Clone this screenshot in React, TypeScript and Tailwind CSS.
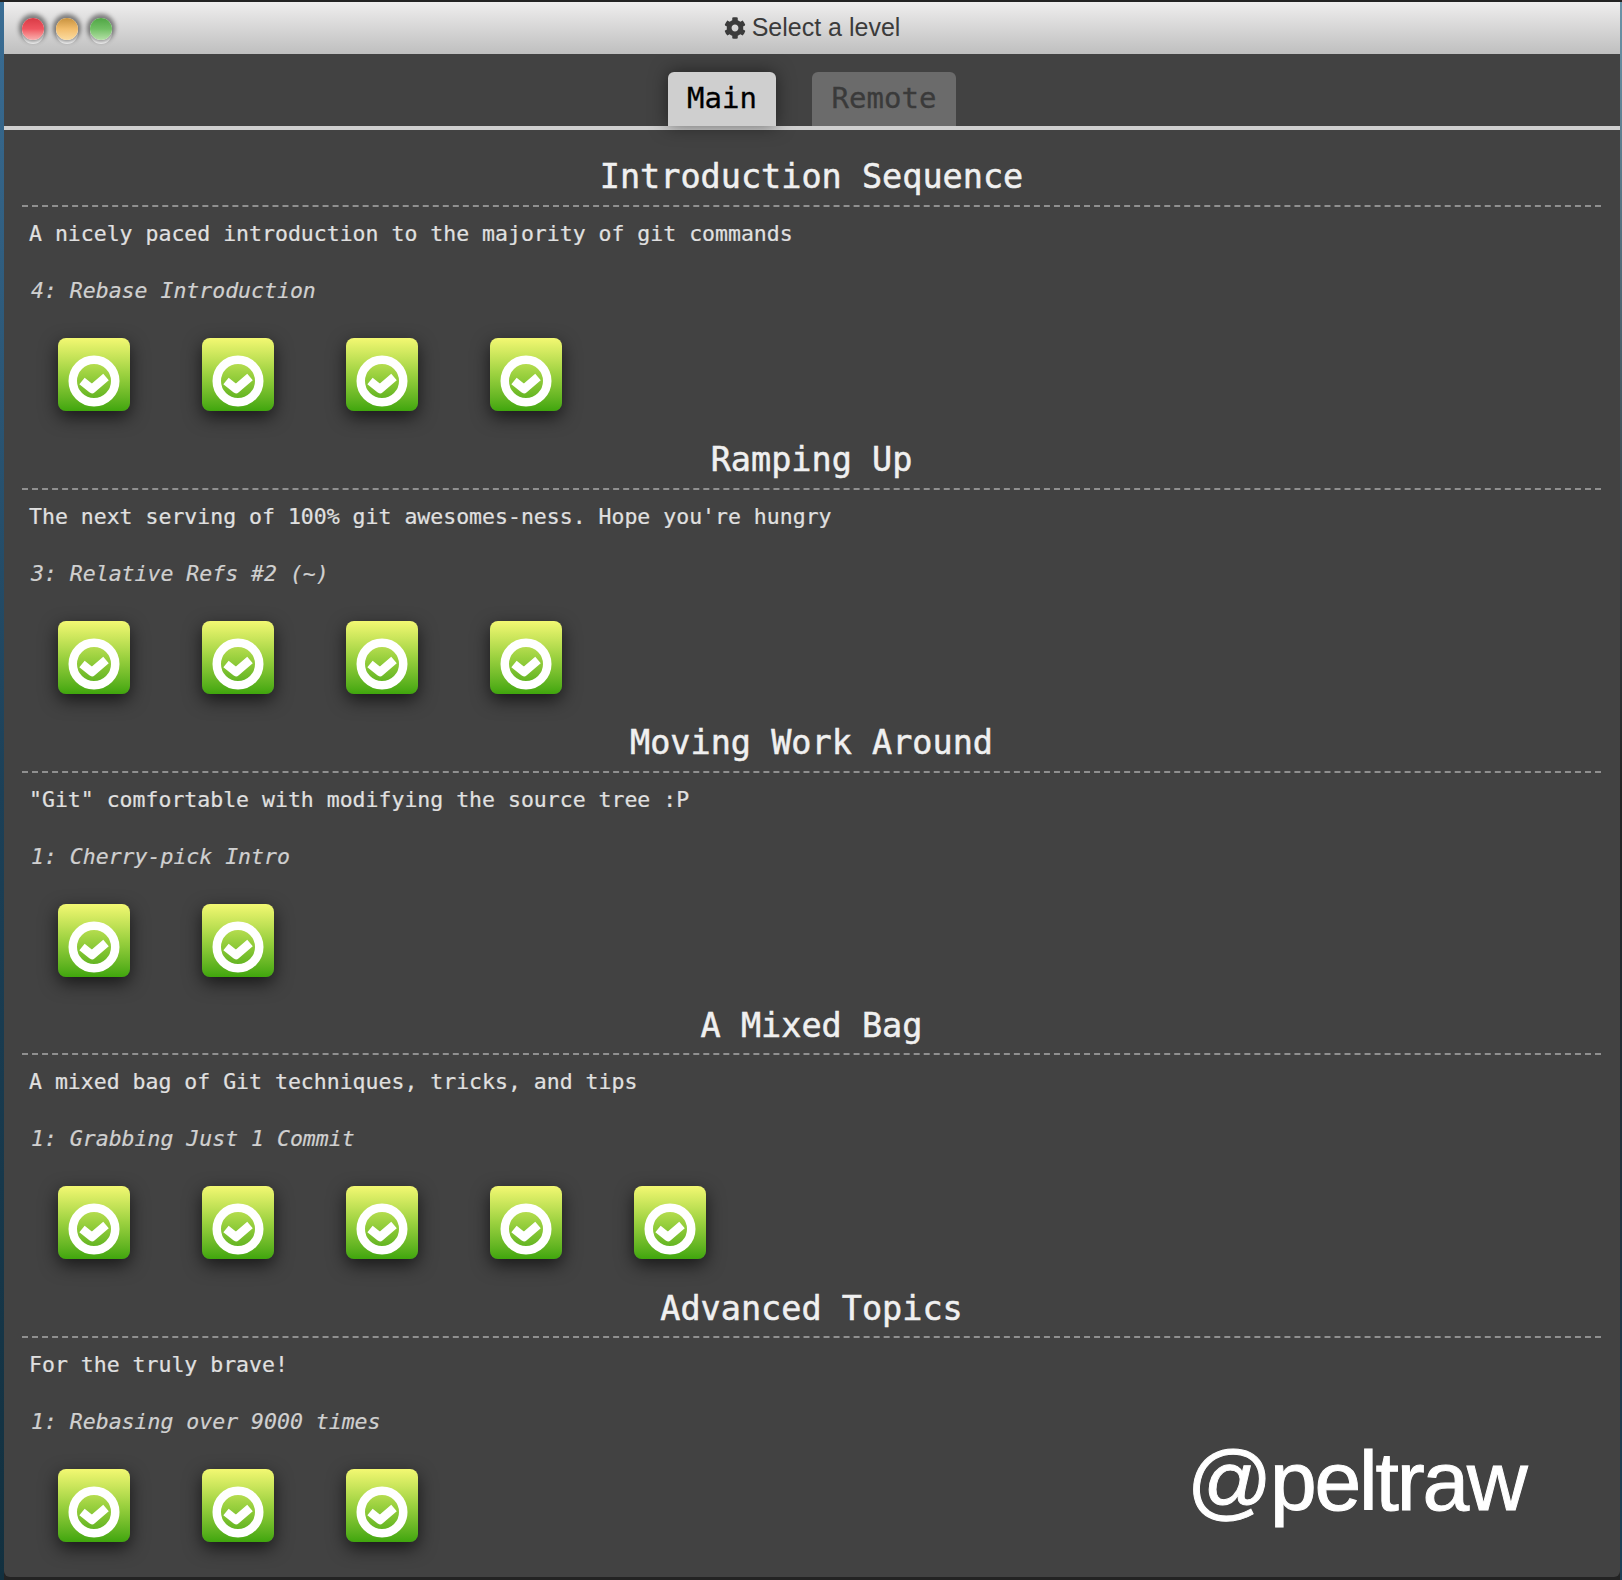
import { FaCog } from "react-icons/fa";

const sections = [
  {
    title: "Introduction Sequence",
    about: "A nicely paced introduction to the majority of git commands",
    level: "4: Rebase Introduction",
    count: 4,
  },
  {
    title: "Ramping Up",
    about: "The next serving of 100% git awesomes-ness. Hope you're hungry",
    level: "3: Relative Refs #2 (~)",
    count: 4,
  },
  {
    title: "Moving Work Around",
    about: '"Git" comfortable with modifying the source tree :P',
    level: "1: Cherry-pick Intro",
    count: 2,
  },
  {
    title: "A Mixed Bag",
    about: "A mixed bag of Git techniques, tricks, and tips",
    level: "1: Grabbing Just 1 Commit",
    count: 5,
  },
  {
    title: "Advanced Topics",
    about: "For the truly brave!",
    level: "1: Rebasing over 9000 times",
    count: 3,
  },
];

function LevelIcon() {
  return (
    <div className="flex h-[73px] w-[72px] items-start justify-center rounded-[8px] bg-gradient-to-b from-[#f3f872] via-[#9bd13f] to-[#3fa60c] pt-[17px] shadow-[0_6px_18px_rgba(0,0,0,0.65)]">
      <svg width="52" height="52" viewBox="0 0 52 52" fill="none">
        <circle cx="26" cy="26" r="21.25" stroke="#fff" strokeWidth="8.5" />
        <path d="M14 26l10 8 14-12" stroke="#fff" strokeWidth="8.5" strokeLinejoin="round" />
      </svg>
    </div>
  );
}

function Light({ color }: { color: string }) {
  return (
    <div className="h-[26px] w-[22px] rounded-full bg-white">
      <div className={`h-[22px] w-[22px] rounded-full shadow-[0_-1px_4px_3px_rgba(0,0,0,0.45)] ${color}`} />
    </div>
  );
}

export default function App() {
  return (
    <div className="relative flex h-[1580px] w-[1622px] overflow-hidden border-t-2 border-[#232323] bg-[#232323] font-['DejaVu_Sans_Mono',monospace]">
      <div className="h-full w-[4px] bg-gradient-to-b from-[#3a6d94] via-[#1c4057] to-[#12303f]" />
      <div className="h-[1575px] w-[1616px] overflow-hidden rounded-b-[6px] bg-[#424242]">
        <div className="relative flex h-[52px] items-center justify-center bg-gradient-to-b from-[#efeeee] to-[#bfbfbf] font-['Liberation_Sans',sans-serif] text-[25px] text-[#3b3b3b]">
          <div className="absolute left-[18px] top-[16px] flex gap-[12px]">
            <Light color="bg-gradient-to-b from-[#d93a45] via-[#ef5560] to-[#f7b0b0]" />
            <Light color="bg-gradient-to-b from-[#c8923e] via-[#f2bd6c] to-[#fbdca0]" />
            <Light color="bg-gradient-to-b from-[#4fa544] via-[#72c065] to-[#b5e0a8]" />
          </div>
          <FaCog className="mr-[6px] h-[22px] w-[22px]" />
          <span>Select a level</span>
        </div>

        <div className="flex h-[76px] items-end justify-center gap-[36px] border-b-[4px] border-[#cfcfcf]">
          <div className="flex h-[54px] w-[108px] items-center justify-center rounded-t-[6px] bg-[#cfcfcf] text-[29px] text-black shadow-[0_0_18px_rgba(0,0,0,0.5)] [-webkit-text-stroke:0.3px]">
            Main
          </div>
          <div className="flex h-[54px] w-[144px] items-center justify-center rounded-t-[6px] bg-[#6b6b6b] text-[29px] text-[#3a3a3a] [-webkit-text-stroke:0.3px]">
            Remote
          </div>
        </div>

        {sections.map((s) => (
          <section key={s.title} className="h-[282.8px] pl-[18px] pr-[19px]">
            <h2 className="flex h-[77px] items-center justify-center border-b-2 border-dashed border-[#8f8f8f] pt-[20px] text-[33.5px] font-normal text-[#f0f0f0] [-webkit-text-stroke:0.5px]">
              {s.title}
            </h2>
            <p className="mt-[10px] px-[7px] text-[21.5px] leading-[34px] text-[#e0e0e0] [-webkit-text-stroke:0.2px]">{s.about}</p>
            <p className="mt-[23px] px-[9px] text-[21.5px] italic leading-[34px] text-[#d0d0d0] [-webkit-text-stroke:0.2px]">{s.level}</p>
            <div className="mt-[30px] flex gap-[72px] pl-[36px]">
              {Array.from({ length: s.count }, (_, i) => (
                <LevelIcon key={i} />
              ))}
            </div>
          </section>
        ))}
      </div>
      <div className="h-full w-[2px] bg-gradient-to-b from-[#6b93a8] via-[#232323] to-[#1c4057]" />

      <div className="absolute left-[1187px] top-[1437px] font-['Liberation_Sans',sans-serif] text-[84px] leading-none tracking-[-2.2px] text-white [-webkit-text-stroke:1px]">
        @peltraw
      </div>
    </div>
  );
}
